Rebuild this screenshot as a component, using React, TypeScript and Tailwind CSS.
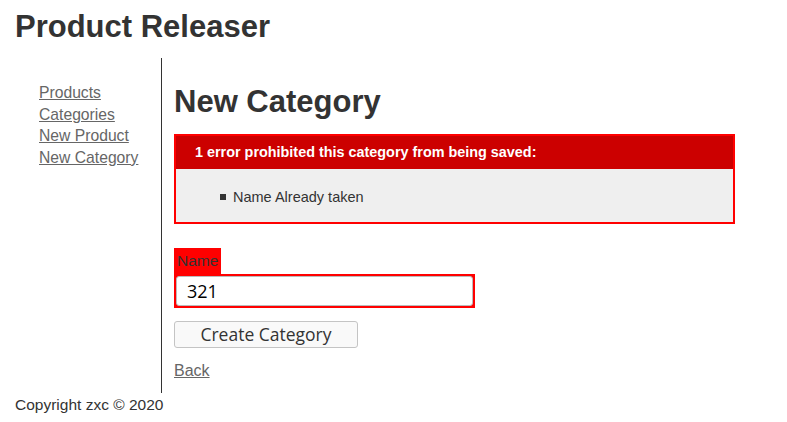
import React from "react";

const App: React.FC = () => {
	return (
		<div className="font-['Liberation_Sans',Arial,sans-serif] text-[#333] bg-white min-h-[422px]">
			<h1 className="text-[31px] font-bold leading-none px-[15px] pt-[11px] h-[58px]">
				Product Releaser
			</h1>
			<div className="flex">
				{/* side nav */}
				<div className="w-[162px] border-r border-[#333] h-[335px] pl-[39px] pt-[24px]">
					<ul className="text-[15.7px] leading-[21.6px] text-[#666]">
						<li><a href="#" className="underline">Products</a></li>
						<li><a href="#" className="underline">Categories</a></li>
						<li><a href="#" className="underline">New Product</a></li>
						<li><a href="#" className="underline">New Category</a></li>
					</ul>
				</div>

				<div className="pl-[12px] pt-[28px]">
					<h2 className="text-[31px] font-bold leading-none mb-[17px]">New Category</h2>

					<div className="w-[561px] border-2 border-[#f00] bg-[#efefef] mb-[25px]">
						<h3 className="bg-[#c00] text-white text-[14.4px] font-bold h-[33px] flex items-center px-[19px]">
							1 error prohibited this category from being saved:
						</h3>
						<ul className="pl-[44px] pt-[19px] pb-[16px] text-[14.5px] leading-[18px]">
							<li className="flex items-center gap-[7px]">
								<span className="w-[6px] h-[6px] bg-[#333] inline-block" />
								Name Already taken
							</li>
						</ul>
					</div>

					<div className="flex flex-col items-start">
						<div className="bg-[#f00] px-[3px] h-[26px] flex items-center text-[15.5px] text-[#333] -mt-[1px]">
							Name
						</div>
						<div className="bg-[#f00] p-[2px] w-[301px]">
							<input
								type="text"
								defaultValue="321"
								className="w-full h-[30px] bg-white border border-[#bbb] rounded-[3px] px-[10px] text-[18px] text-black font-['Open_Sans',sans-serif] outline-none"
							/>
						</div>
					</div>

					<button className="mt-[13px] w-[184px] h-[27px] border border-[#c4c4c4] rounded-[3px] bg-[#f9f9f9] text-[17.5px] text-[#333] font-['Open_Sans',sans-serif] leading-none">
						Create Category
					</button>

					<div className="mt-[11px]">
						<a href="#" className="underline text-[16px] text-[#666]">Back</a>
					</div>
				</div>
			</div>
			<p className="px-[15px] text-[15.5px]">Copyright zxc © 2020</p>
		</div>
	);
};

export default App;
